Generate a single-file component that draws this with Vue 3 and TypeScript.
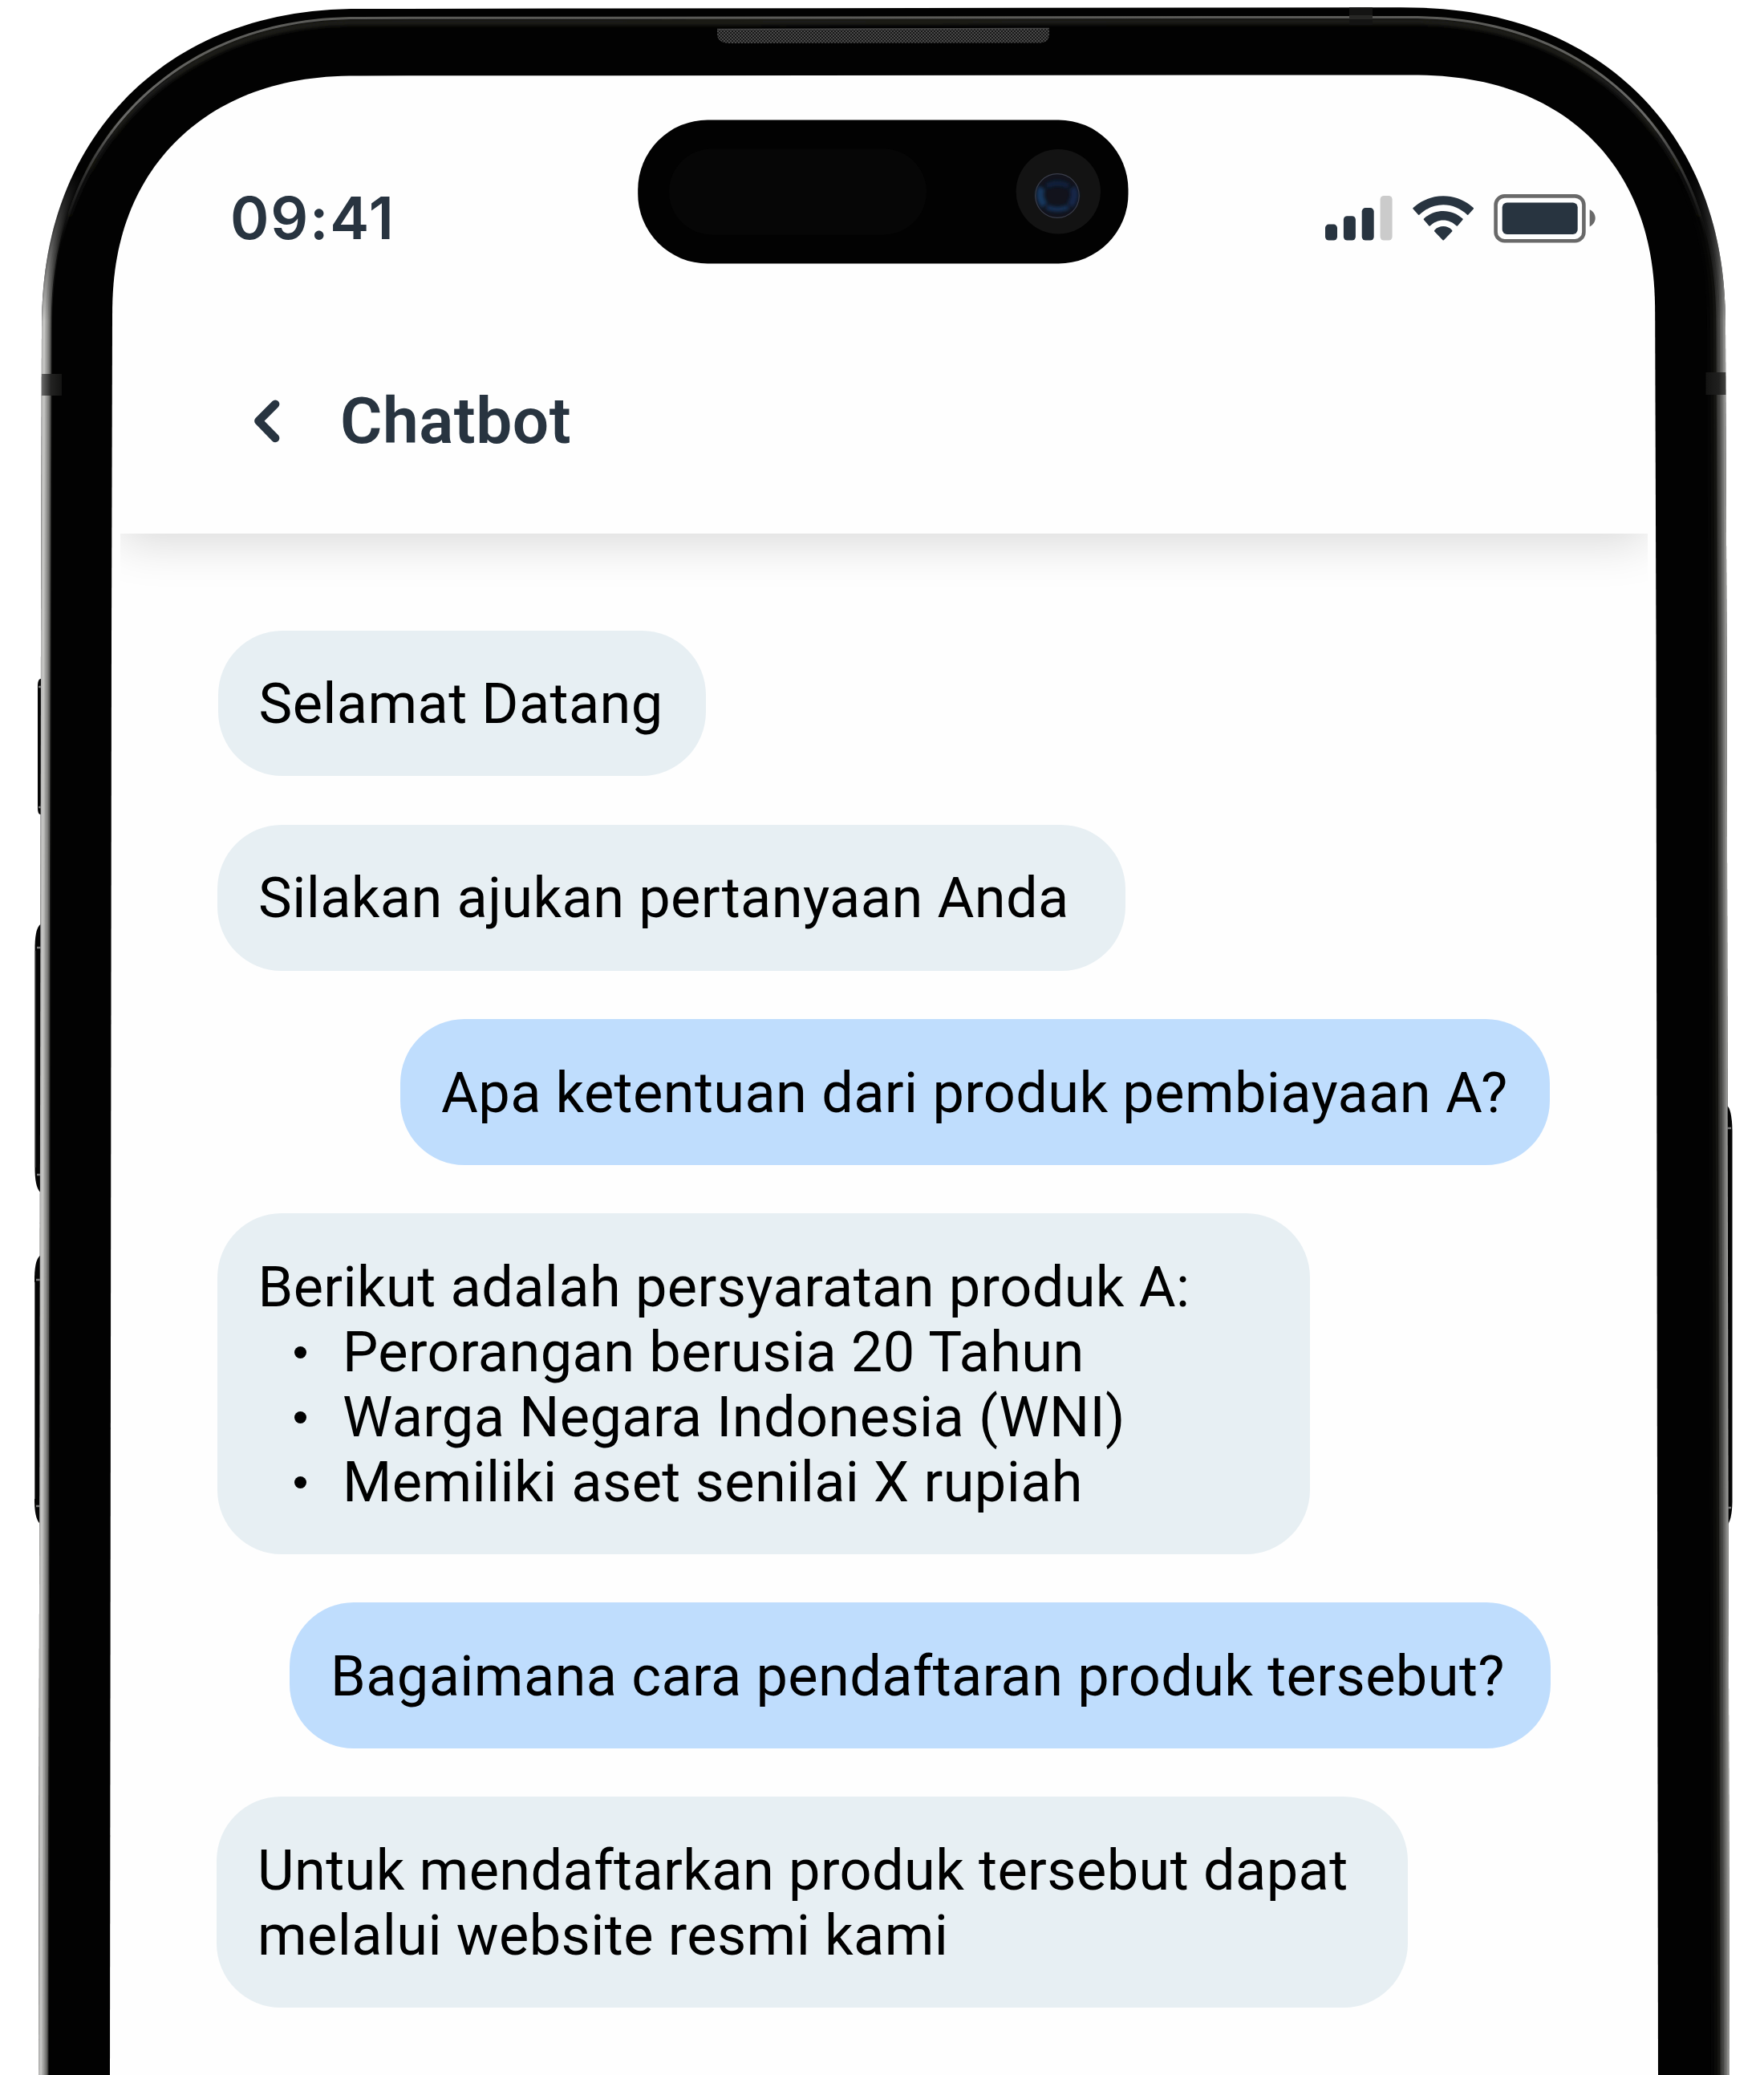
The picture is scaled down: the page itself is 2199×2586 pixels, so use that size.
<script setup lang="ts">
type Point = [number, number]

interface Message {
  from: 'bot' | 'user'
  left: number
  width: number
  lines: string[]
  bullets?: string[]
}

const messages: Message[] = [
  { from: 'bot', left: 271.5, width: 608.5, lines: ['Selamat Datang'] },
  { from: 'bot', left: 271, width: 1132, lines: ['Silakan ajukan pertanyaan Anda'] },
  { from: 'user', left: 499, width: 1433, lines: ['Apa ketentuan dari produk pembiayaan A?'] },
  {
    from: 'bot',
    left: 270.5,
    width: 1362,
    lines: ['Berikut adalah persyaratan produk A:'],
    bullets: ['Perorangan berusia 20 Tahun', 'Warga Negara Indonesia (WNI)', 'Memiliki aset senilai X rupiah'],
  },
  { from: 'user', left: 361, width: 1572, lines: ['Bagaimana cara pendaftaran produk tersebut?'] },
  { from: 'bot', left: 270, width: 1484.5, lines: ['Untuk mendaftarkan produk tersebut dapat', 'melalui website resmi kami'] },
]

// Superellipse quarter, from the vertical side up to the horizontal one.
// dir is 1 for a left corner, -1 for a right corner.
function corner(bx: number, by: number, rx: number, ry: number, n: number, dir: 1 | -1): Point[] {
  const pts: Point[] = []
  const steps = 60
  for (let i = 0; i <= steps; i++) {
    const t = (i / steps) * (Math.PI / 2)
    const u = Math.pow(Math.cos(t), 2 / n)
    const v = Math.pow(Math.max(0, Math.sin(t)), 2 / n)
    pts.push([bx + dir * rx * (1 - u), by + ry * (1 - v)])
  }
  return pts
}

function line(points: Point[]): string {
  return 'M' + points.map(([x, y]) => `${x.toFixed(2)} ${y.toFixed(2)}`).join('L')
}

const outerLeft: Point[] = [[48, 2600], [51, 800], ...corner(52, 11, 400, 400, 2.2, 1), [700, 10.6]]
const outerRight: Point[] = [
  [1500, 9.5],
  ...corner(2151, 9.3, 405, 400, 2.22, -1).reverse(),
  [2152.5, 800], [2156, 2600],
]
const inner: Point[] = [
  [137, 2600], [139, 800], ...corner(140, 94.4, 308, 300, 2.25, 1),
  ...corner(2063.2, 93.4, 308, 300, 2.29, -1).reverse(),
  [2064.5, 800], [2067, 2600],
]
const highlight: Point[] = [
  ...corner(65, 22.4, 385, 385, 2.16, 1),
  ...corner(2139, 21.4, 385, 385, 2.18, -1).reverse(),
]

const bodyPath = line([...outerLeft, ...outerRight]) + 'Z'
const screenPath = line(inner) + 'Z'
const leftEdge = line(outerLeft)
const rightEdge = line(outerRight)
const highlightPath = line(highlight)

const leftRim = [
  { w: 26, c: '#1a1a19' }, { w: 23, c: '#60605e' }, { w: 19, c: '#80807e' },
  { w: 15, c: '#9a9a98' }, { w: 11, c: '#b2b2b0' }, { w: 8, c: '#c4c4c2' }, { w: 3, c: '#b4b4b3' },
]
const rightRim = [
  { w: 46, c: '#050505' }, { w: 38, c: '#0b0b09' }, { w: 30, c: '#151512' }, { w: 23, c: '#353533' },
  { w: 19, c: '#454543' }, { w: 14, c: '#5c5c5a' }, { w: 10, c: '#727270' }, { w: 6, c: '#8a8a88' }, { w: 2, c: '#a4a4a2' },
]

const bars = [
  { x: 0, h: 20, c: '#283440' }, { x: 22.9, h: 30.3, c: '#283440' },
  { x: 45.7, h: 40.5, c: '#283440' }, { x: 68.6, h: 55.6, c: '#cbcbcb' },
]
</script>

<template>
  <main class="stage">
    <svg class="device" viewBox="0 0 2199 2586" width="2199" height="2586" aria-hidden="true">
      <defs>
        <clipPath id="body"><path :d="bodyPath" /></clipPath>
        <linearGradient id="fade" gradientUnits="userSpaceOnUse" x1="0" y1="215" x2="0" y2="400">
          <stop offset="0" stop-color="#000" /><stop offset="0.45" stop-color="#666" /><stop offset="1" stop-color="#fff" />
        </linearGradient>
        <mask id="rim" maskUnits="userSpaceOnUse" x="0" y="0" width="2199" height="2586">
          <rect width="2199" height="2586" fill="url(#fade)" />
        </mask>
        <linearGradient id="shine" gradientUnits="userSpaceOnUse" x1="0" y1="20" x2="0" y2="310">
          <stop offset="0" stop-color="#5a5a57" /><stop offset="0.45" stop-color="#6a6a68" /><stop offset="1" stop-color="#222" stop-opacity="0" />
        </linearGradient>
        <linearGradient id="shineSoft" gradientUnits="userSpaceOnUse" x1="0" y1="20" x2="0" y2="310">
          <stop offset="0" stop-color="#24241f" /><stop offset="0.45" stop-color="#1c1c19" /><stop offset="1" stop-color="#111" stop-opacity="0" />
        </linearGradient>
        <pattern id="mesh" width="4" height="4" patternUnits="userSpaceOnUse">
          <rect width="4" height="4" fill="#191919" />
          <rect width="2" height="2" fill="#484848" /><rect x="2" y="2" width="2" height="2" fill="#484848" />
        </pattern>
        <linearGradient id="bandL"><stop offset="0" stop-color="#777" /><stop offset="0.5" stop-color="#232322" /><stop offset="1" stop-color="#131312" /></linearGradient>
        <linearGradient id="bandR"><stop offset="0" stop-color="#131312" /><stop offset="0.6" stop-color="#20201f" /><stop offset="1" stop-color="#4c4c4a" /></linearGradient>
        <filter id="soft" x="-50%" y="-50%" width="200%" height="200%"><feGaussianBlur stdDeviation="2.2" /></filter>
        <filter id="glow" filterUnits="userSpaceOnUse" x="0" y="0" width="2199" height="500"><feGaussianBlur stdDeviation="2.5" /></filter>
      </defs>

      <!-- side buttons -->
      <g>
        <path d="M52 846h-2q-3 2-3 8v153q0 7 3 8h2z" fill="#050505" />
        <path d="M52 1151q-8 3-8.500 28V1459q.5 24 8.500 28z" fill="#050505" />
        <path d="M51.500 1564q-8 3-8.500 28V1872q.5 24 8.500 28z" fill="#050505" />
        <path d="M2152 1377q7 4 7.500 32V1872q-.5 24-7.500 30z" fill="#050505" />
        <path d="M48 856h4M48 1006h4M46 1181h6M46 1464h6M45 1595h6M45 1877h6M2153 1406h5M2153 1879h5" stroke="#777" stroke-width="2.500" />
        <path d="M44 1185V1455M43.500 1598V1868" stroke="#555" stroke-width="1" />
      </g>

      <path :d="bodyPath" fill="#020202" />
      <g clip-path="url(#body)">
        <g mask="url(#rim)" fill="none">
          <path v-for="s in leftRim" :key="'l' + s.w" :d="leftEdge" :stroke="s.c" :stroke-width="s.w" />
          <path v-for="s in rightRim" :key="'r' + s.w" :d="rightEdge" :stroke="s.c" :stroke-width="s.w" />
        </g>
        <path :d="highlightPath" fill="none" stroke="url(#shineSoft)" stroke-width="7" filter="url(#glow)" transform="translate(0 5)" />
        <path :d="highlightPath" fill="none" stroke="url(#shine)" stroke-width="3" />
        <rect x="50" y="466" width="27" height="27" fill="url(#bandL)" />
        <rect x="2126.500" y="464" width="27" height="28" fill="url(#bandR)" />
        <rect x="1682" y="9" width="29" height="22" fill="#141413" />
        <rect x="1682" y="19" width="29" height="5" fill="#272725" />
      </g>
      <path :d="screenPath" fill="#fefefe" />

      <!-- earpiece -->
      <path d="M894 36 1308 35V42q0 11-12 11.500L908 54q-14-1-14-12z" fill="url(#mesh)" />
      <path d="M894 36.500 1308 35.500" stroke="#444" stroke-width="1.500" />

      <!-- camera island -->
      <rect x="795.200" y="149.500" width="611.300" height="179" rx="87" fill="#020202" />
      <rect x="834" y="185.500" width="321" height="107" rx="53.500" fill="#060606" />
      <circle cx="1319.300" cy="238.700" r="52.700" fill="#131313" />
      <circle cx="1318" cy="244" r="27.500" fill="#12131c" />
      <g fill="none" filter="url(#soft)">
        <path d="M1305 232q13-7 27 0" stroke="#10233f" stroke-width="6" />
        <path d="M1305 258q13 6 27 0" stroke="#123258" stroke-width="6" />
        <path d="M1299 234q-6 10 3 22" stroke="#16385f" stroke-width="9" />
        <path d="M1337 234q6 10-3 22" stroke="#122848" stroke-width="9" />
      </g>
      <circle cx="1318" cy="244" r="27.300" fill="none" stroke="#3a3d4a" stroke-width="1.200" />
    </svg>

    <section class="screen">
      <header class="status">
        <span class="time">09:41</span>
        <div class="icons">
          <svg class="signal" viewBox="0 0 84 56" width="84" height="56">
            <rect v-for="b in bars" :key="b.x" :x="b.x" :y="55.6 - b.h" width="15" :height="b.h" rx="4.5" :fill="b.c" />
          </svg>
          <svg class="wifi" viewBox="0 0 76.400 56" width="76.400" height="56">
            <g fill="#283440">
              <path d="M.4 16.200Q0 15.600.6 15C11 5.500 24 .2 38.200.2S65.400 5.500 75.800 15q.6.600.200 1.200L69.500 23.600q-.7.700-1.400.1C59.500 15.800 49.300 11.300 38.200 11.300S16.900 15.800 8.300 23.700q-.7.600-1.400-.1z" />
              <path d="M14 29.900q-.6-.7 0-1.400C20.800 22.300 29 18.900 38.200 18.900S55.600 22.300 62.400 28.500q.6.700 0 1.400L56.200 37.300q-.7.700-1.500.1C50 33.200 44.500 30.500 38.200 30.500S26.400 33.200 21.700 37.400q-.8.600-1.500-.1z" />
              <path d="M27.200 44.400q-.7-.8.200-1.700C30.400 39.500 34 38 38.200 38s7.800 1.500 10.800 4.700q.9.900.2 1.700L38.900 55.200q-.7.700-1.400 0z" />
            </g>
          </svg>
          <svg class="battery" viewBox="0 0 128 61" width="128" height="61">
            <rect x="2.600" y="2.400" width="109.800" height="55.800" rx="11" fill="none" stroke="#696969" stroke-width="4.600" />
            <rect x="10.700" y="10.400" width="94" height="39.600" rx="6" fill="#283440" />
            <path d="M119.700 19.200c4.300 2 7 6 7 10.600s-2.700 8.600-7 10.600z" fill="#696969" />
          </svg>
        </div>
      </header>

      <nav class="appbar">
        <svg class="back" viewBox="0 0 34 54" width="34" height="54">
          <path d="M27.200 5.600 6.300 26.600 27.200 48" fill="none" stroke="#283440" stroke-width="10.400" stroke-linecap="round" stroke-linejoin="round" />
        </svg>
        <h1 class="title">Chatbot</h1>
      </nav>

      <div class="shade"></div>

      <div class="chat">
        <article
          v-for="(m, i) in messages"
          :key="i"
          class="bubble"
          :class="m.from"
          :style="{ marginLeft: m.left + 'px', width: m.width + 'px' }"
        >
          <p v-for="text in m.lines" :key="text">{{ text }}</p>
          <ul v-if="m.bullets">
            <li v-for="b in m.bullets" :key="b">{{ b }}</li>
          </ul>
        </article>
      </div>
    </section>
  </main>
</template>

<style>
body {
  margin: 0;
  background: #fff;
  overflow: hidden;
}
</style>

<style scoped>
.stage {
  position: relative;
  width: 2199px;
  height: 2586px;
  overflow: hidden;
  font-family: Roboto, 'Liberation Sans', sans-serif;
}
.device {
  position: absolute;
  inset: 0;
}
.screen {
  position: relative;
  display: flex;
  flex-direction: column;
}
.status {
  display: flex;
  justify-content: space-between;
  align-items: center;
  height: 330px;
  box-sizing: border-box;
  padding: 214px 209px 0 287px;
}
.time {
  font-family: Inter, sans-serif;
  font-size: 73.5px;
  font-weight: 600;
  line-height: 80px;
  letter-spacing: 1.8px;
  color: #283440;
}
.icons {
  display: flex;
  align-items: center;
}
.wifi {
  margin-left: 25px;
}
.battery {
  margin-left: 25px;
}
.appbar {
  display: flex;
  align-items: center;
  height: 335px;
  box-sizing: border-box;
  padding: 55px 0 0 316px;
}
.title {
  margin: 0 0 0 74px;
  font-size: 80.2px;
  font-weight: 600;
  line-height: 100px;
  letter-spacing: 0.5px;
  color: #283440;
}
.shade {
  position: relative;
  height: 120.6px;
  margin: 0 145.5px 0 150px;
  overflow: hidden;
}
.shade::before {
  content: '';
  position: absolute;
  left: 0;
  right: 0;
  top: -80px;
  height: 80px;
  box-shadow: 0 10px 60px rgba(0, 0, 0, 0.155);
}
.chat {
  display: flex;
  flex-direction: column;
  gap: 60.4px;
}
.bubble {
  box-sizing: border-box;
  padding: 51.7px 0 49.1px 51px;
  border-radius: 80px;
  font-size: 70.3px;
  line-height: 81px;
  letter-spacing: 0.4px;
  color: #000;
  white-space: nowrap;
}
.bot {
  background: #e7eff3;
}
.user {
  background: #bfddfd;
}
.bubble p,
.bubble ul {
  margin: 0;
  padding: 0;
  list-style: none;
}
.bubble li {
  display: flex;
  align-items: center;
  padding-left: 45px;
}
.bubble li::before {
  content: '';
  width: 15px;
  height: 15px;
  margin-right: 45.5px;
  border-radius: 50%;
  background: #000;
}
</style>
